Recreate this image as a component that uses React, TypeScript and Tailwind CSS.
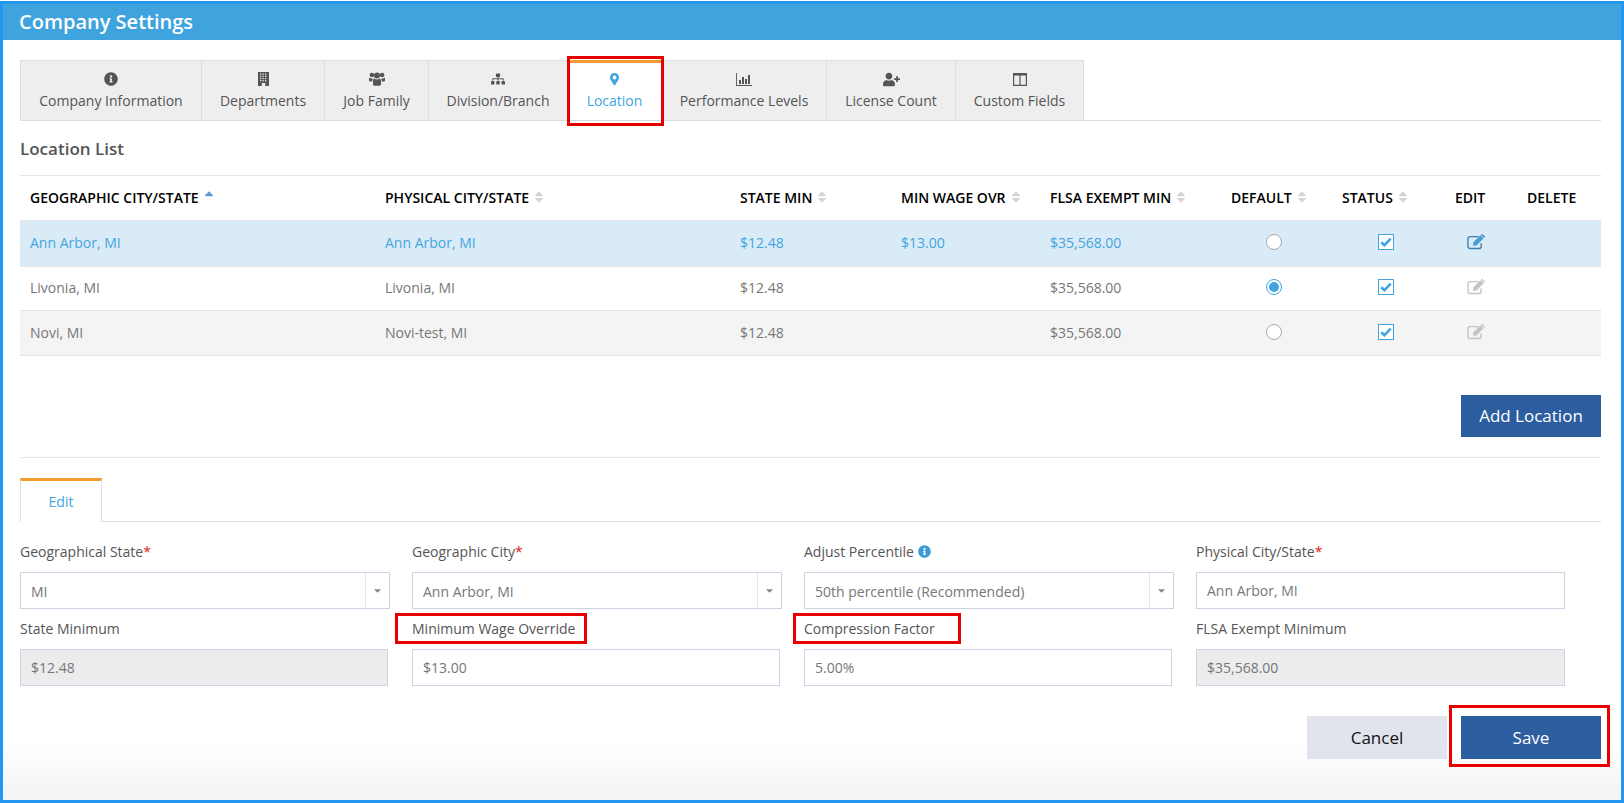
import React from 'react'
import { FaInfoCircle, FaSitemap, FaUserPlus, FaSort, FaSortUp, FaCaretDown } from 'react-icons/fa'

const BuildingIcon = () => (
  <svg width="11" height="14" viewBox="0 0 11 14" fill="currentColor">
    <path d="M0 0h11v14H0z" />
    <g fill="#eee">
      {[2, 4.5, 7].map((x) => [1.5, 3.7, 5.9, 8.1].map((y) => <rect key={`${x}-${y}`} x={x} y={y} width="1.3" height="1.2" />))}
      <rect x="3.8" y="11" width="3.4" height="3" />
    </g>
  </svg>
)

const UsersIcon = () => (
  <svg width="16" height="14" viewBox="0 0 16 14" fill="currentColor">
    <circle cx="2.9" cy="3" r="2.3" />
    <circle cx="13.1" cy="3" r="2.3" />
    <circle cx="8" cy="3.6" r="3" />
    <path d="M0 5.6c.6.6 1.5 1 2.6 1 .6 0 1 .1 1.2.3-.4.7-.6 1.5-.6 2.5H1c-.7 0-1-.4-1-1.1zM16 5.6c-.6.6-1.5 1-2.6 1-.6 0-1 .1-1.2.3.4.7.6 1.5.6 2.5H15c.7 0 1-.4 1-1.1z" />
    <path d="M4 9.4c0-1.7.7-2.9 1.6-2.9.6.5 1.4.9 2.4.9s1.8-.4 2.4-.9c.9 0 1.6 1.2 1.6 2.9v2.9c0 .9-.6 1.4-1.4 1.4H5.4c-.8 0-1.4-.5-1.4-1.4z" />
  </svg>
)

const PinIcon = () => (
  <svg width="9" height="13" viewBox="0 0 9 13" fill="currentColor">
    <path fillRule="evenodd" d="M4.5 0A4.5 4.5 0 0 0 0 4.5c0 1.2.4 1.9.9 2.8L4.5 13l3.6-5.7c.5-.9.9-1.6.9-2.8A4.5 4.5 0 0 0 4.5 0zm0 6.4a1.9 1.9 0 1 1 0-3.8 1.9 1.9 0 0 1 0 3.8z" />
  </svg>
)

const ChartIcon = () => (
  <svg width="16" height="13" viewBox="0 0 16 13" fill="currentColor">
    <path d="M0 0h.9v12H16v1H0z" />
    <path d="M3 7h2v4H3zM6 4h2v7H6zM9 6h2v5H9zM12 2h2v9h-2z" />
  </svg>
)

const ColumnsIcon = () => (
  <svg width="14" height="13" viewBox="0 0 14 13" fill="currentColor">
    <path fillRule="evenodd" d="M0 0h14v13H0zm1.2 2.6V11.8h5.2V2.6zm6.4 0V11.8h5.2V2.6z" />
  </svg>
)

const EditIcon = ({ selected }: { selected?: boolean }) => (
  <svg width="19" height="16" viewBox="0 0 18 15" fill="none">
    <path
      d="M13.4 8.6v3.1a2 2 0 0 1-2 2H2.9a2 2 0 0 1-2-2V4.4a2 2 0 0 1 2-2h8"
      stroke={selected ? '#3d7fb3' : '#c4c4c4'}
      strokeWidth="1.3"
    />
    <path d="M6 7.8 12.8 1l3 2.9L9 10.7l-3.3.4z" fill={selected ? '#4a9ad4' : '#c4c4c4'} />
    <path d="M13.6.2a.8.8 0 0 1 1.1 0l2 1.9a.8.8 0 0 1 0 1.1l-.4.3-3-2.9z" fill={selected ? '#3d7fb3' : '#c4c4c4'} />
  </svg>
)

const tabs = [
  { label: 'Company Information', icon: <FaInfoCircle size={14} />, width: 'w-[181px]' },
  { label: 'Departments', icon: <BuildingIcon />, width: 'w-[123px]' },
  { label: 'Job Family', icon: <UsersIcon />, width: 'w-[104px]' },
  { label: 'Division/Branch', icon: <FaSitemap size={14} />, width: 'w-[139px]' },
  { label: 'Location', icon: <PinIcon />, width: 'w-[94px]', active: true },
  { label: 'Performance Levels', icon: <ChartIcon />, width: 'w-[165px]' },
  { label: 'License Count', icon: <FaUserPlus size={17} />, width: 'w-[129px]' },
  { label: 'Custom Fields', icon: <ColumnsIcon />, width: 'w-[129px]' },
]

const rows = [
  { city: 'Ann Arbor, MI', physical: 'Ann Arbor, MI', min: '$12.48', ovr: '$13.00', flsa: '$35,568.00', isDefault: false, selected: true, height: 'h-[46px]' },
  { city: 'Livonia, MI', physical: 'Livonia, MI', min: '$12.48', ovr: '', flsa: '$35,568.00', isDefault: true, height: 'h-[44px]' },
  { city: 'Novi, MI', physical: 'Novi-test, MI', min: '$12.48', ovr: '', flsa: '$35,568.00', isDefault: false, striped: true, height: 'h-[45px]' },
]

const RedBox = ({ className }: { className: string }) => (
  <span className={`pointer-events-none absolute z-10 border-[3px] border-[#e60000] ${className}`} />
)

const SortHead = ({ label, active }: { label: string; active?: boolean }) => (
  <span className="inline-flex items-center gap-[3px]">
    {label}
    {active ? <FaSortUp size={14} className="text-[#5b9bd5]" /> : <FaSort size={14} className="text-[#d5d5d5]" />}
  </span>
)

const Select = ({ value }: { value: string }) => (
  <div className="flex h-[37px] w-[370px] items-center border border-[#cdd3e2] bg-white text-[14px] text-[#777]">
    <span className="flex-1 pl-[10px] pt-[2px]">{value}</span>
    <span className="flex h-full w-[24px] items-center justify-center border-l border-[#e3e6ee] text-[#888]">
      <FaCaretDown size={11} />
    </span>
  </div>
)

const Input = ({ value, disabled }: { value: string; disabled?: boolean }) => (
  <div className={`flex h-[37px] items-center border border-[#cdd3e2] pl-[10px] text-[14px] text-[#777] ${disabled ? 'bg-[#ececec]' : 'bg-white'}`}>
    {value}
  </div>
)

const Label = ({ children }: { children: React.ReactNode }) => (
  <div className="mb-[11px] flex h-[20px] items-center text-[14px] text-[#555]">{children}</div>
)

const Req = () => <span className="text-[#e02020]">*</span>

export default function App() {
  return (
    <div className="h-[803px] w-full bg-white pt-px font-['Open_Sans',sans-serif]">
      <div className="flex h-[802px] flex-col border-[3px] border-[#2196f3] bg-gradient-to-b from-white from-[93%] to-[#f3f3f3]">
        <div className="flex h-[36px] shrink-0 items-center bg-[#3fa3dd] pl-[16px] text-[20px] font-semibold text-white">
          Company Settings
        </div>

        <div className="flex flex-1 flex-col pl-[17px] pr-[20px] pt-[20px]">
          {/* Tabs */}
          <div className="flex h-[61px] shrink-0 border-b border-[#ddd]">
            {tabs.map((tab) => (
              <div
                key={tab.label}
                className={`relative flex flex-col items-center border-l border-t text-[14px] ${tab.width} ${
                  tab.active
                    ? 'border-t-[3px] border-l-[#ddd] border-t-[#f59a2e] bg-white pt-[7px] text-[#42a5e0]'
                    : 'border-[#ddd] bg-[#eee] pt-[9px] text-[#555]'
                } last:border-r`}
              >
                <span className="flex h-[18px] items-center">{tab.icon}</span>
                <span className="mt-[3px] leading-[20px]">{tab.label}</span>
                {tab.active && <RedBox className="-left-px -right-[3px] -top-[7px] -bottom-[6px]" />}
              </div>
            ))}
          </div>

          <h2 className="mt-[17px] h-[22px] text-[17px] font-semibold leading-[22px] text-[#555]">Location List</h2>

          {/* Location table */}
          <table className="mt-[15px] w-[1581px] table-fixed border-t border-[#e5e5e5] text-[14px]">
            <colgroup>
              <col className="w-[355px]" />
              <col className="w-[355px]" />
              <col className="w-[161px]" />
              <col className="w-[149px]" />
              <col className="w-[181px]" />
              <col className="w-[111px]" />
              <col className="w-[113px]" />
              <col className="w-[72px]" />
              <col className="w-[84px]" />
            </colgroup>
            <thead>
              <tr className="h-[45px] border-b border-[#e5e5e5] text-left text-[14px] uppercase text-black">
                <th className="pb-[2px] pl-[10px] font-semibold"><SortHead label="Geographic City/State" active /></th>
                <th className="pb-[2px] pl-[10px] font-semibold"><SortHead label="Physical City/State" /></th>
                <th className="pb-[2px] pl-[10px] font-semibold"><SortHead label="State Min" /></th>
                <th className="pb-[2px] pl-[10px] font-semibold"><SortHead label="Min Wage Ovr" /></th>
                <th className="pb-[2px] pl-[10px] font-semibold"><SortHead label="FLSA Exempt Min" /></th>
                <th className="pb-[2px] pl-[10px] font-semibold"><SortHead label="Default" /></th>
                <th className="pb-[2px] pl-[10px] font-semibold"><SortHead label="Status" /></th>
                <th className="pb-[2px] pl-[10px] font-semibold">Edit</th>
                <th className="pb-[2px] pl-[10px] font-semibold">Delete</th>
              </tr>
            </thead>
            <tbody>
              {rows.map((row) => (
                <tr
                  key={row.city}
                  className={`border-b border-[#e5e5e5] ${row.height} ${
                    row.selected ? 'bg-[#d9ebf6] text-[#42a5e0]' : row.striped ? 'bg-[#f4f4f4] text-[#777]' : 'bg-white text-[#777]'
                  }`}
                >
                  <td className="pb-[2px] pl-[10px]">{row.city}</td>
                  <td className="pb-[2px] pl-[10px]">{row.physical}</td>
                  <td className="pb-[2px] pl-[10px]">{row.min}</td>
                  <td className="pb-[2px] pl-[10px]">{row.ovr}</td>
                  <td className="pb-[2px] pl-[10px]">{row.flsa}</td>
                  <td className="pb-[3px] pl-[45px]">
                    <span className={`flex h-[16px] w-[16px] items-center justify-center rounded-full border bg-white ${row.isDefault ? 'border-[#42a5e0]' : 'border-[#aaa]'}`}>
                      {row.isDefault && <span className="h-[10px] w-[10px] rounded-full bg-[#42a5e0]" />}
                    </span>
                  </td>
                  <td className="pb-[3px] pl-[46px]">
                    <span className="flex h-[16px] w-[16px] items-center justify-center border border-[#42a5e0] bg-white">
                      <svg width="12" height="10" viewBox="0 0 12 10" fill="none">
                        <path d="M1.3 5.2 4.4 8.2 10.7 1.6" stroke="#42a5e0" strokeWidth="2.6" />
                      </svg>
                    </span>
                  </td>
                  <td className="pb-[3px] pl-[22px]">
                    <EditIcon selected={row.selected} />
                  </td>
                  <td />
                </tr>
              ))}
            </tbody>
          </table>

          <div className="mt-[39px] flex w-[1581px] justify-end">
            <button className="h-[42px] w-[140px] bg-[#2c5d9f] text-[17px] text-white">Add Location</button>
          </div>

          <div className="mt-[20px] w-[1581px] border-t border-[#e5e5e5]" />

          {/* Edit form */}
          <div className="mt-[20px] flex h-[44px] w-[1581px] border-b border-[#d9dce4]">
            <div className="flex h-[44px] w-[82px] items-center justify-center border-x border-t-[3px] border-x-[#e0e0e0] border-t-[#f59a2e] bg-white text-[14px] text-[#42a5e0]">
              Edit
            </div>
          </div>

          <div className="mt-[19px] grid w-[1545px] grid-cols-[368px_368px_368px_369px] gap-x-[24px] gap-y-[9px]">
            <div>
              <Label>Geographical State<Req /></Label>
              <Select value="MI" />
            </div>
            <div>
              <Label>Geographic City<Req /></Label>
              <Select value="Ann Arbor, MI" />
            </div>
            <div>
              <Label>
                Adjust Percentile
                <FaInfoCircle size={13} className="ml-[4px] text-[#3f9bd8]" />
              </Label>
              <Select value="50th percentile (Recommended)" />
            </div>
            <div>
              <Label>Physical City/State<Req /></Label>
              <Input value="Ann Arbor, MI" />
            </div>
            <div>
              <Label>State Minimum</Label>
              <Input value="$12.48" disabled />
            </div>
            <div>
              <Label>
                <span className="relative">
                  Minimum Wage Override
                  <RedBox className="-left-[17px] -right-[12px] -top-[5px] -bottom-[5px]" />
                </span>
              </Label>
              <Input value="$13.00" />
            </div>
            <div>
              <Label>
                <span className="relative">
                  Compression Factor
                  <RedBox className="-left-[11px] -right-[26px] -top-[5px] -bottom-[5px]" />
                </span>
              </Label>
              <Input value="5.00%" />
            </div>
            <div>
              <Label>FLSA Exempt Minimum</Label>
              <Input value="$35,568.00" disabled />
            </div>
          </div>

          <div className="mt-[30px] flex w-[1581px] justify-end gap-[14px]">
            <button className="h-[43px] w-[140px] bg-[#e1e4ec] text-[17px] text-[#111]">Cancel</button>
            <button className="relative h-[43px] w-[140px] bg-[#2c5d9f] text-[17px] text-white">
              Save
              <RedBox className="-left-[12px] -right-[9px] -top-[11px] -bottom-[8px]" />
            </button>
          </div>
        </div>
      </div>
    </div>
  )
}
